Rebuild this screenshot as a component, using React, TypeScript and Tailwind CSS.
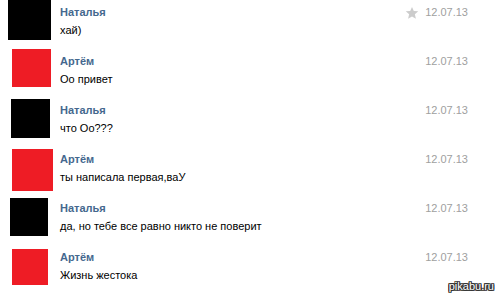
import React from "react";

type Row = {
  name: string;
  text: string;
  avatar: string;
  star?: boolean;
};

const rows: Row[] = [
  { name: "Наталья", text: "хай)", avatar: "bg-black ml-[8px] mt-0 w-[43px] h-[40px]", star: true },
  { name: "Артём", text: "Оо привет", avatar: "bg-[#ee1c25] ml-[12px] mt-0 w-[39px] h-[38px]" },
  { name: "Наталья", text: "что Оо???", avatar: "bg-black ml-[11px] mt-[1px] w-[39px] h-[39px]" },
  { name: "Артём", text: "ты написала первая,ваУ", avatar: "bg-[#ee1c25] ml-[12px] mt-[2px] w-[41px] h-[42px]" },
  { name: "Наталья", text: "да, но тебе все равно никто не поверит", avatar: "bg-black ml-[10px] mt-[2px] w-[38px] h-[38px]" },
  { name: "Артём", text: "Жизнь жестока", avatar: "bg-[#ee1c25] ml-[12px] mt-[4px] w-[36px] h-[36px]" },
];

export default function App() {
  return (
    <div
      className="relative w-[499px] h-[297px] bg-white overflow-hidden"
      style={{ fontFamily: '"Liberation Sans", Arial, sans-serif' }}
    >
      {rows.map((r, i) => (
        <div key={i} className="flex h-[49px]">
          <div className="w-[60px] shrink-0">
            <div className={r.avatar} />
          </div>
          <div className="flex-1 flex flex-col">
            <div className="flex items-center h-[13px] mt-[6px]">
              <span className="text-[11px] font-bold text-[#45688e] leading-none">{r.name}</span>
              <div className="flex-1" />
              {r.star && (
                <svg width="14" height="14" viewBox="0 0 24 24" className="mr-[6px]">
                  <path
                    d="M12 1.5l3.1 7 7.6.7-5.8 5 1.8 7.5L12 17.8l-6.7 3.9 1.8-7.5-5.8-5 7.6-.7z"
                    fill="#cccccc"
                  />
                </svg>
              )}
              <span className="text-[11px] text-[#a0a0a0] leading-none mr-[31px]">12.07.13</span>
            </div>
            <div className="h-[13px] mt-[5px] flex items-center">
              <span className="text-[11px] text-black leading-none">{r.text}</span>
            </div>
          </div>
        </div>
      ))}
      <div
        className="absolute right-[5px] bottom-[5px] text-[11px] text-white leading-none"
        style={{
          fontFamily: '"Liberation Sans", sans-serif',
          textShadow:
            "1px 0 0 #333, -1px 0 0 #333, 0 1px 0 #333, 0 -1px 0 #333, 1px 1px 0 #333, -1px -1px 0 #333, 1px -1px 0 #333, -1px 1px 0 #333",
        }}
      >
        pikabu.ru
      </div>
    </div>
  );
}
